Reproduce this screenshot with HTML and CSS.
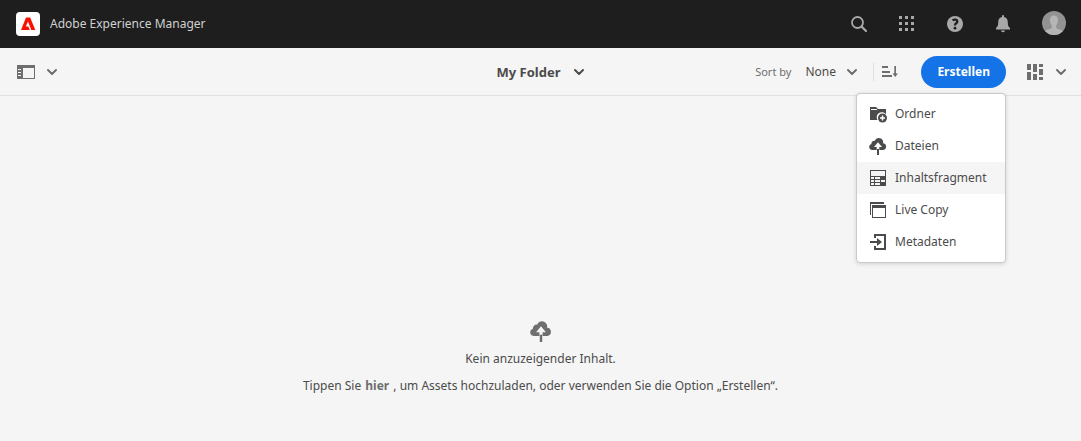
FILE: index.html
```html
<!DOCTYPE html>
<html lang="de">
<head>
<meta charset="utf-8">
<title>Adobe Experience Manager</title>
<link rel="stylesheet" href="styles.css">
</head>
<body>
<svg class="sprite" aria-hidden="true">
  <symbol id="chevron" viewBox="0 0 12 8"><path d="M2 2l4 4 4-4" fill="none" stroke="currentColor" stroke-width="2" stroke-linecap="round" stroke-linejoin="round"/></symbol>
  <symbol id="upload" viewBox="0 0 18 18"><path fill="currentColor" fill-rule="evenodd" d="M3 13a3 3 0 0 1-.6-5.900A3 3 0 0 1 5.800 3.800 4.300 4.300 0 0 1 14 6.300 3.400 3.400 0 0 1 14.500 13H10.300V10H13L9 5.200 5 10h2.700v3zM8 12h2v6H8z"/></symbol>
</svg>
<header class="shell">
  <a class="brand" href="#">
    <svg class="logo" viewBox="0 0 24 24" aria-hidden="true"><rect width="24" height="24" rx="4" fill="#fff"/><path fill="#fa0f00" d="M10 5.500h4.200L19.300 18h-4L12 9.600 9.800 14.600h2.600L13.700 18H5z"/></svg>
    <span>Adobe Experience Manager</span>
  </a>
  <nav class="tools" aria-label="Werkzeuge">
    <button class="tool" aria-label="Suche"><svg width="16" height="16" viewBox="0 0 16 16"><circle cx="6.500" cy="6.500" r="5.500" fill="none" stroke="currentColor" stroke-width="1.800"/><path d="m10.500 10.500 4.500 4.500" stroke="currentColor" stroke-width="2.200" stroke-linecap="round"/></svg></button>
    <button class="tool" aria-label="Lösungen"><svg width="16" height="16" viewBox="0 0 16 16"><path fill="currentColor" d="M0 0h3v3H0zM6 0h3v3H6zM12 0h3v3h-3zM0 6h3v3H0zM6 6h3v3H6zM12 6h3v3h-3zM0 12h3v3H0zM6 12h3v3H6zM12 12h3v3h-3z"/></svg></button>
    <button class="tool" aria-label="Hilfe"><svg width="16" height="16" viewBox="0 0 16 16"><circle cx="8" cy="8" r="8" fill="currentColor"/><path d="M5.500 4.300C8 3 10.300 3.600 10.300 5.400 10.300 7.300 8 7.200 8 9.500" fill="none" stroke="#1e1e1e" stroke-width="2.300"/><circle cx="8" cy="12.200" r="1.400" fill="#1e1e1e"/></svg></button>
    <button class="tool" aria-label="Benachrichtigungen"><svg width="16" height="18" viewBox="0 0 16 18"><path fill="currentColor" d="M7 2V1a1 1 0 0 1 2 0v1c3 .6 3.800 2.800 3.800 5.500 0 3 .7 4.300 2.200 5.500v1.500H1V13c1.500-1.200 2.200-2.500 2.200-5.500C3.200 4.800 4 2.600 7 2ZM6 15.500h4a2 1.800 0 0 1-4 0Z"/></svg></button>
    <button class="tool profile" aria-label="Benutzer"><svg width="24" height="24" viewBox="0 0 24 24"><clipPath id="disc"><circle cx="12" cy="12" r="12"/></clipPath><g clip-path="url(#disc)"><path fill="#929292" d="M0 0h24v24H0z"/><path fill="#b5b5b5" d="M12 4.500c2.800 0 4.200 2 4 5-.2 2.300-.9 4-1.800 5v2.300c.5 1.600 5.800 1.600 7.300 4V25h-19v-4.200c1.500-2.400 6.800-2.400 7.300-4v-2.300c-.9-1-1.600-2.700-1.800-5-.2-3 1.200-5 4-5Z"/></g></svg></button>
  </nav>
</header>

<div class="bar">
  <button class="rail" aria-label="Seitenleiste">
    <svg width="18" height="14" viewBox="0 0 18 14"><path fill="currentColor" fill-rule="evenodd" d="M0 0h18v14H0zM6 3v10h11V3zM1 4v1h3V4zM1 7v1h3V7zM1 10v1h3v-1z"/></svg>
    <svg class="chevron"><use href="#chevron"/></svg>
  </button>
  <button class="crumb">My Folder <svg class="chevron"><use href="#chevron"/></svg></button>
  <div class="actions">
    <label class="sort-label" for="sort">Sort by</label>
    <span class="sort"><select id="sort"><option>None</option></select><svg class="chevron"><use href="#chevron"/></svg></span>
    <button class="order" aria-label="Reihenfolge"><svg width="16" height="12" viewBox="0 0 16 12"><path fill="currentColor" d="M0 0h6v2H0zM0 5h8v2H0zM0 9h10v2H0zM12.300 0h1.700v7.500h2L13.200 11 10.500 7.500h1.800z"/></svg></button>
    <div class="create">
      <button class="primary" aria-haspopup="menu" aria-expanded="true">Erstellen</button>
      <div class="menu" role="menu">
        <button class="item" role="menuitem"><svg class="icon" viewBox="0 0 18 18"><path fill="currentColor" d="M1 2h6l2 2h8v5.500A5 5 0 0 0 8.500 15H1z"/><path stroke="#fff" d="M2 4.500h6"/><circle cx="13.500" cy="13" r="4.500" fill="currentColor"/><path d="M13.500 10.500v5M11 13h5" stroke="#fff" stroke-width="1.500"/></svg>Ordner</button>
        <button class="item" role="menuitem"><svg class="icon"><use href="#upload"/></svg>Dateien</button>
        <button class="item active" role="menuitem"><svg class="icon" viewBox="0 0 18 18"><path fill="currentColor" fill-rule="evenodd" d="M1 1h16v16H1zM2 2v5h14V2zM2 8v2h3V8zM6 8v2h5V8zM2 11v2h3v-2zM6 11v2h5v-2zM2 14v2h3v-2zM6 14v2h5v-2zM12 11v2h4v-2z"/></svg>Inhaltsfragment</button>
        <button class="item" role="menuitem"><svg class="icon" viewBox="0 0 18 18"><path fill="currentColor" fill-rule="evenodd" d="M1 1h14v2H2v11H1zM3 4h14v13H3zM4 7v9h12V7z"/></svg>Live Copy</button>
        <button class="item" role="menuitem"><svg class="icon" viewBox="0 0 18 18"><path fill="currentColor" d="M5 1h12v16H5v-4h2v2h8V3H7v2H5zM1 8h7V5l5 4-5 4v-3H1z"/></svg>Metadaten</button>
      </div>
    </div>
    <button class="view" aria-label="Ansicht">
      <svg width="16" height="16" viewBox="0 0 16 16"><path fill="currentColor" d="M0 0h4v6H0zM0 8h4v8H0zM6 0h4v8H6zM6 10h4v6H6zM12 0h4v3h-4zM12 5h4v6h-4zM12 13h4v3h-4z"/></svg>
      <svg class="chevron"><use href="#chevron"/></svg>
    </button>
  </div>
</div>

<main class="empty">
  <svg class="cloud"><use href="#upload"/></svg>
  <p>Kein anzuzeigender Inhalt.</p>
  <p>Tippen Sie <a href="#">hier</a> , um Assets hochzuladen, oder verwenden Sie die Option „Erstellen“.</p>
</main>
</body>
</html>
```

FILE: styles.css
```css
* { box-sizing: border-box; }
body {
  margin: 0;
  min-height: 100vh;
  display: flex;
  flex-direction: column;
  background: #f5f5f5;
  color: #4b4b4b;
  font: 12px/20px "Noto Sans", sans-serif;
}
button, select {
  margin: 0;
  padding: 0;
  border: 0;
  background: none;
  color: inherit;
  font: inherit;
  cursor: pointer;
}
svg { display: block; flex: none; }
.sprite { display: none; }
.shell {
  height: 48px;
  display: flex;
  justify-content: space-between;
  background: #1e1e1e;
  color: #a8a8a8;
}
.brand {
  display: flex;
  align-items: center;
  gap: 10px;
  padding-left: 16px;
  color: #d0d0d0;
  text-decoration: none;
}
.logo { width: 24px; height: 24px; }
.tools { display: flex; }
.tool { width: 48px; display: grid; place-items: center; }
.profile { width: 54px; padding-bottom: 2px; }
.bar {
  height: 48px;
  display: grid;
  grid-template-columns: 1fr auto 1fr;
  align-items: center;
  border-bottom: 1px solid #e1e1e1;
}
.chevron { width: 12px; height: 8px; }
.rail, .view { display: flex; align-items: center; color: #6e6e6e; }
.rail { gap: 11px; padding-left: 17px; }
.crumb {
  display: flex;
  align-items: center;
  gap: 12px;
  font-size: 13px;
  font-weight: 700;
}
.actions { display: flex; align-items: center; justify-content: flex-end; }
.sort-label { font-size: 11px; color: #6e6e6e; padding-right: 14px; }
.sort { display: flex; align-items: center; gap: 10px; }
.sort select { appearance: none; }
.sort .chevron { color: #6e6e6e; pointer-events: none; }
.order {
  height: 18px;
  margin-left: 15px;
  padding-left: 8px;
  border-left: 1px solid #e1e1e1;
  color: #6e6e6e;
}
.create { position: relative; margin: 0 21px 0 23px; }
.primary {
  height: 32px;
  padding: 0 16px;
  border-radius: 16px;
  background: #1473e6;
  color: #fff;
  font-weight: 700;
}
.menu {
  position: absolute;
  top: 37px;
  right: 0;
  z-index: 1;
  width: 150px;
  padding: 4px 0;
  border: 1px solid #cacaca;
  border-radius: 4px;
  background: #fff;
  box-shadow: 0 1px 4px rgba(0, 0, 0, .15);
}
.item {
  width: 100%;
  height: 32px;
  display: flex;
  align-items: center;
  gap: 8px;
  padding-left: 12px;
}
.active { background: #f5f5f5; }
.icon { width: 18px; height: 18px; }
.view { gap: 12px; padding-right: 14px; }
.empty {
  flex: 1;
  display: flex;
  flex-direction: column;
  align-items: center;
  justify-content: flex-end;
  padding-bottom: 45px;
}
.cloud { width: 22px; height: 22px; color: #6e6e6e; }
.empty p { margin: 7px 0 0; text-align: center; }
.empty a { margin: 0 1px; color: #6e6e6e; font-weight: 700; text-decoration: none; }
```
